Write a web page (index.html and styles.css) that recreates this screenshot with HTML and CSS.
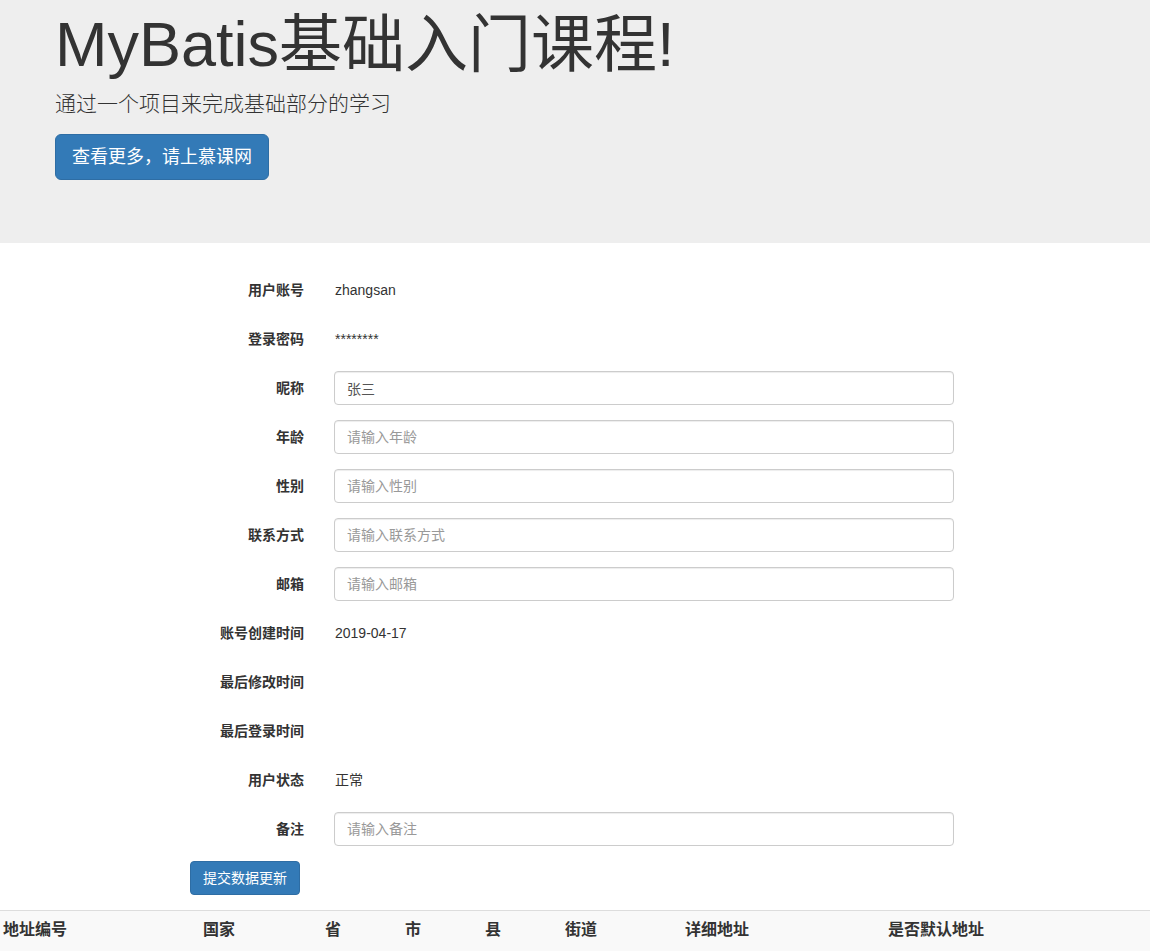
FILE: index.html
```html
<!DOCTYPE html>
<html lang="zh-CN">
<head>
<meta charset="utf-8">
<title>MyBatis基础入门课程</title>
<link rel="stylesheet" href="styles.css">
</head>
<body>
<div class="jumbotron">
  <h1 class="title">MyBatis基础入门课程!</h1>
  <p class="lead">通过一个项目来完成基础部分的学习</p>
  <div class="actions"><a class="btn btn-lg" href="#">查看更多，请上慕课网</a></div>
</div>

<form class="user-form">
  <div class="form-row">
    <label class="form-label">用户账号</label>
    <div class="form-field"><p class="static">zhangsan</p></div>
  </div>
  <div class="form-row">
    <label class="form-label">登录密码</label>
    <div class="form-field"><p class="static">********</p></div>
  </div>
  <div class="form-row">
    <label class="form-label">昵称</label>
    <div class="form-field"><input class="form-input" type="text" value="张三"></div>
  </div>
  <div class="form-row">
    <label class="form-label">年龄</label>
    <div class="form-field"><input class="form-input" type="text" placeholder="请输入年龄"></div>
  </div>
  <div class="form-row">
    <label class="form-label">性别</label>
    <div class="form-field"><input class="form-input" type="text" placeholder="请输入性别"></div>
  </div>
  <div class="form-row">
    <label class="form-label">联系方式</label>
    <div class="form-field"><input class="form-input" type="text" placeholder="请输入联系方式"></div>
  </div>
  <div class="form-row">
    <label class="form-label">邮箱</label>
    <div class="form-field"><input class="form-input" type="text" placeholder="请输入邮箱"></div>
  </div>
  <div class="form-row">
    <label class="form-label">账号创建时间</label>
    <div class="form-field"><p class="static">2019-04-17</p></div>
  </div>
  <div class="form-row">
    <label class="form-label">最后修改时间</label>
    <div class="form-field"><p class="static"></p></div>
  </div>
  <div class="form-row">
    <label class="form-label">最后登录时间</label>
    <div class="form-field"><p class="static"></p></div>
  </div>
  <div class="form-row">
    <label class="form-label">用户状态</label>
    <div class="form-field"><p class="static">正常</p></div>
  </div>
  <div class="form-row">
    <label class="form-label">备注</label>
    <div class="form-field"><input class="form-input" type="text" placeholder="请输入备注"></div>
  </div>
  <div class="submit-row">
    <button class="btn btn-submit" type="button">提交数据更新</button>
  </div>
</form>

<div class="address-table">
  <div class="th">地址编号</div>
  <div class="th">国家</div>
  <div class="th">省</div>
  <div class="th">市</div>
  <div class="th">县</div>
  <div class="th">街道</div>
  <div class="th">详细地址</div>
  <div class="th">是否默认地址</div>
</div>
</body>
</html>
```

FILE: styles.css
```css
* { box-sizing: border-box; }

html, body {
  margin: 0;
  padding: 0;
}

body {
  font-family: "Liberation Sans", "Noto Sans CJK SC", sans-serif;
  font-size: 14px;
  line-height: 1.42857;
  color: #333;
  background: #fff;
}

.jumbotron {
  background: #eee;
  padding: 10px 60px 48px 55px;
  margin-bottom: 30px;
  height: 243px;
}

.title {
  margin: 0 0 10px;
  font-size: 63px;
  font-weight: 400;
  line-height: 69px;
  color: #333;
}

.lead {
  margin: 0 0 15px;
  font-size: 21px;
  font-weight: 300;
  line-height: 30px;
}

.actions {
  display: flex;
}

.btn {
  display: inline-block;
  color: #fff;
  background: #337ab7;
  border: 1px solid #2e6da4;
  text-decoration: none;
  font-family: inherit;
  cursor: pointer;
}

.btn-lg {
  padding: 10px 16px;
  font-size: 18px;
  line-height: 24px;
  border-radius: 6px;
}

.user-form {
  margin: 0;
  padding-left: 160px;
}

.form-row {
  display: grid;
  grid-template-columns: 159px 650px;
  margin-bottom: 15px;
}

.form-label {
  padding: 7px 15px 0 0;
  text-align: right;
  font-weight: 700;
  line-height: 20px;
}

.form-field {
  padding: 0 15px;
  min-height: 34px;
}

.static {
  margin: 0;
  padding: 7px 0 7px 1px;
  min-height: 34px;
  line-height: 20px;
}

.form-input {
  display: block;
  width: 100%;
  height: 34px;
  padding: 6px 12px;
  font-family: inherit;
  font-size: 14px;
  line-height: 20px;
  color: #555;
  background: #fff;
  border: 1px solid #ccc;
  border-radius: 4px;
  box-shadow: inset 0 1px 1px rgba(0, 0, 0, 0.075);
}

.form-input::placeholder {
  color: #999;
}

.submit-row {
  padding-left: 30px;
  margin-bottom: 15px;
}

.btn-submit {
  padding: 6px 12px;
  font-size: 14px;
  line-height: 20px;
  border-radius: 4px;
  height: 34px;
}

.address-table {
  display: grid;
  grid-template-columns: 200px 122px 80px 80px 80px 120px 203px 1fr;
  border-top: 1px solid #ddd;
  background: #f9f9f9;
  min-height: 50px;
}

.th {
  padding: 7px 3px;
  font-size: 16px;
  font-weight: 700;
  line-height: 23px;
  color: #333;
}
```
